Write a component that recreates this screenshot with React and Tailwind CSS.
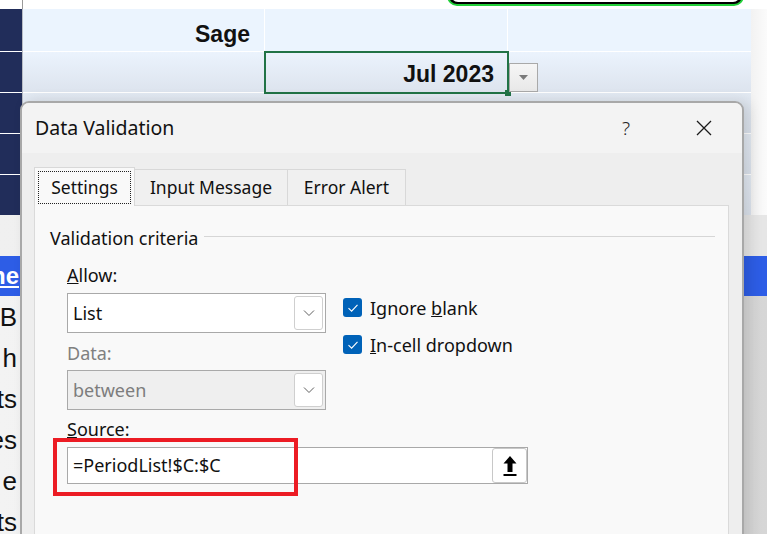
import React from "react";

function Chevron({ color = "#5f5f5f" }) {
  return (
    <svg width="12" height="8" viewBox="0 0 12 8" fill="none">
      <path d="M1 1.5 L6 6.5 L11 1.5" stroke={color} strokeWidth="1" />
    </svg>
  );
}

function Check() {
  return (
    <svg width="12" height="10" viewBox="0 0 12 10" fill="none">
      <path d="M1.5 5.2 L4.6 8.2 L10.5 1.8" stroke="#ffffff" strokeWidth="1.1" />
    </svg>
  );
}

function Select({ value, disabled }) {
  return (
    <div
      className={`flex h-[40px] w-[259px] items-center border border-[#a9a9a9] ${
        disabled ? "bg-[#efefef] text-[#7d7d7d]" : "bg-white text-[#111]"
      }`}
    >
      <span className="flex-1 pl-[5px] text-[18px]">{value}</span>
      <div className="mr-[2px] flex h-[34px] w-[29px] items-center justify-center rounded-[3px] border border-[#cfcfcf] bg-white">
        <Chevron />
      </div>
    </div>
  );
}

function CheckRow({ children }) {
  return (
    <div className="flex h-[19px] items-center gap-[8px]">
      <div className="flex h-[19px] w-[19px] items-center justify-center rounded-[3px] bg-[#0062b8]">
        <Check />
      </div>
      <span className="pt-[1px] text-[18px] leading-[19px] text-[#111]">{children}</span>
    </div>
  );
}

export default function App() {
  const lowerLetters = ["B", "h", "ts", "es", "e", "ts"];
  return (
    <div className="relative h-[534px] w-[767px] overflow-hidden bg-[#efefef] font-['Noto_Sans',sans-serif]">
      {/* top strip */}
      <div className="flex h-[9px] bg-white">
        <div className="w-[23px] border-r border-[#9a9a9a]" />
      </div>

      {/* sheet area */}
      <div className="flex">
        <div className="flex w-[22px] flex-col bg-[#212d5a]">
          <div className="h-[43px] border-b border-white" />
          <div className="h-[41px] border-b border-white" />
          <div className="h-[41px] border-b border-white" />
          <div className="h-[41px] border-b border-white" />
          <div className="h-[40px]" />
        </div>
        <div className="w-[729px] border-l border-[#b8bcc4] font-['Liberation_Sans',sans-serif]">
          {/* row 1 */}
          <div className="grid h-[43px] grid-cols-[242px_243px_1fr] border-b border-white bg-[#ebf4fe]">
            <div className="flex items-center justify-end border-r border-white pr-[14px] pt-[8px] text-[23px] font-bold text-[#111]">
              Sage
            </div>
            <div className="border-r border-white" />
            <div />
          </div>
          {/* row 2 */}
          <div className="grid h-[41px] grid-cols-[242px_243px_1fr] border-b border-white bg-gradient-to-b from-[#ebf3fd] to-[#dde4ee]">
            <div />
            <div className="relative -mt-[1px] -ml-[1px] h-[43px] w-[245px] border-2 border-[#217346]">
              <div className="flex h-full items-center justify-end pr-[13px] pt-[4px] text-[23px] font-bold text-[#111]">
                Jul 2023
              </div>
              <div className="absolute -right-[4px] -bottom-[4px] h-[6px] w-[6px] bg-[#217346]" />
              <div className="absolute -right-[31px] top-[10px] flex h-[29px] w-[29px] items-center justify-center border border-[#a9a9a9] bg-gradient-to-b from-[#f6f6f6] to-[#e8e8e8]">
                <svg width="9" height="5" viewBox="0 0 9 5">
                  <path d="M0 0 H9 L4.5 5 Z" fill="#7a7a7a" />
                </svg>
              </div>
            </div>
            <div />
          </div>
          <div className="h-[41px] border-b border-white bg-gradient-to-b from-[#e3eaf3] to-[#dbe2ec]" />
          <div className="h-[41px] border-b border-white bg-gradient-to-b from-[#e3eaf3] to-[#dbe2ec]" />
          <div className="h-[40px] bg-gradient-to-b from-[#e3eaf3] to-[#dbe2ec]" />
        </div>
        <div className="flex-1 bg-gradient-to-r from-[#f2f2f2] to-[#fbfbfb]" />
      </div>

      {/* lower area */}
      <div className="flex flex-col">
        <div className="h-[41px] bg-gradient-to-r from-[#f0f0f0] to-[#e6e6e6]" />
        <div className="flex h-[40px] items-center bg-[#2d5de6]">
          <div className="w-[19px] overflow-hidden">
            <div className="flex justify-end font-['Liberation_Sans',sans-serif] text-[24px] font-bold text-white underline">
              ne
            </div>
          </div>
        </div>
        {lowerLetters.map((t, i) => (
          <div
            key={i}
            className="flex h-[41px] items-center bg-gradient-to-r from-[#f3f3f3] via-[#ececec] to-[#d6d6d6]"
          >
            <div className="w-[20px] overflow-hidden">
              <div className="flex justify-end pr-[3px] font-['Liberation_Sans',sans-serif] text-[26px] leading-[30px] text-[#111]">
                {t}
              </div>
            </div>
          </div>
        ))}
      </div>

      {/* green box at top */}
      <div className="absolute left-[447px] top-[-40px] h-[46px] w-[297px] rounded-[10px] border-[2px] border-[#22d03a] bg-black p-[2px]">
        <div className="h-full w-full rounded-[7px] bg-white" />
      </div>

      {/* dialog */}
      <div className="absolute left-[20px] top-[101px] h-[460px] w-[724px] overflow-hidden rounded-t-[9px] border-2 border-[#a8a8a8] bg-[#eeeeee] shadow-[6px_0_14px_rgba(0,0,0,0.12)]">
        <div className="flex h-[50px] items-center bg-[#f3f3f3] pl-[13px] text-[#111]">
          <span className="flex-1 text-[19.5px]">Data Validation</span>
          <span className="mr-[66px] text-[19px] font-light text-[#222]">?</span>
          <svg className="mr-[30px]" width="16" height="16" viewBox="0 0 16 16">
            <path d="M1 1 L15 15 M15 1 L1 15" stroke="#1a1a1a" strokeWidth="1.3" />
          </svg>
        </div>

        <div className="pl-[12px] pt-[14px]">
          {/* tabs */}
          <div className="relative z-10 flex items-end text-[17.5px] text-[#111]">
            <div className="flex h-[39px] w-[101px] items-center justify-center border border-b-0 border-[#d8d8d8] bg-[#f9f9f9] pt-[1px]">
              <div className="flex h-[33px] w-[93px] items-center justify-center border border-dotted border-[#222]">
                Settings
              </div>
            </div>
            <div className="mb-[1px] flex h-[36px] w-[153px] items-center justify-center border border-l-0 border-b-0 border-[#d8d8d8] bg-[#f0f0f0]">
              Input Message
            </div>
            <div className="mb-[1px] flex h-[36px] w-[118px] items-center justify-center border border-l-0 border-b-0 border-[#d8d8d8] bg-[#f0f0f0]">
              Error Alert
            </div>
          </div>

          {/* panel */}
          <div className="-mt-[1px] h-[340px] w-[695px] border border-[#dadada] bg-[#f9f9f9] pl-[15px] pr-[13px] pt-[20px]">
            <div className="flex h-[24px] items-center gap-[6px]">
              <span className="text-[18px] text-[#111]">Validation criteria</span>
              <div className="-mt-[4px] h-px flex-1 bg-[#d6d6d6]" />
            </div>

            <div className="ml-[17px] mt-[14px]">
              <div className="flex">
                <div className="flex w-[259px] flex-col">
                  <div className="h-[22px] text-[18px] leading-[22px] text-[#111]">
                    <span className="underline">A</span>llow:
                  </div>
                  <div className="mt-[7px]">
                    <Select value="List" />
                  </div>
                  <div className="mt-[9px] h-[22px] text-[18px] leading-[22px] text-[#808080]">
                    Data:
                  </div>
                  <div className="mt-[6px]">
                    <Select value="between" disabled />
                  </div>
                </div>
                <div className="ml-[17px] flex flex-col gap-[18px] pt-[34px]">
                  <CheckRow>
                    Ignore <span className="underline">b</span>lank
                  </CheckRow>
                  <CheckRow>
                    <span className="underline">I</span>n-cell dropdown
                  </CheckRow>
                </div>
              </div>
              <div className="mt-[8px] h-[22px] text-[18px] leading-[22px] text-[#111]">
                <span className="underline">S</span>ource:
              </div>
              <div className="mt-[7px] flex h-[37px] w-[461px] items-center border border-[#a9a9a9] bg-white">
                <span className="flex-1 pl-[5px] text-[18px] text-[#111]">=PeriodList!$C:$C</span>
                <div className="flex h-[35px] w-[35px] items-center justify-center rounded-[3px] border border-[#c8c8c8] bg-white">
                  <svg width="16" height="22" viewBox="0 0 16 22">
                    <path d="M8 1 L14.5 8.5 H10.5 V17 H5.5 V8.5 H1.5 Z" fill="#000" />
                    <rect x="1.5" y="19" width="13" height="2" fill="#000" />
                  </svg>
                </div>
              </div>
            </div>
          </div>
        </div>
      </div>

      {/* red annotation box */}
      <div className="absolute left-[53px] top-[438px] h-[58px] w-[245px] border-[4px] border-[#ec1c24]" />
    </div>
  );
}
